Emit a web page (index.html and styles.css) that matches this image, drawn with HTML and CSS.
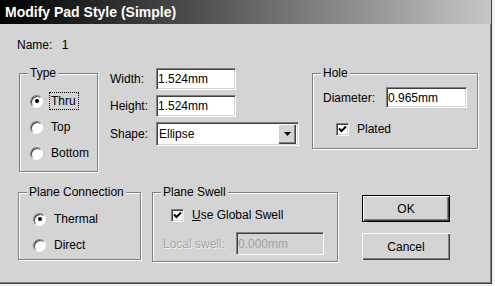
FILE: index.html
```html
<!DOCTYPE html>
<html lang="en">
<head>
  <meta charset="UTF-8">
  <title>Modify Pad Style (Simple)</title>
  <link rel="stylesheet" href="styles.css">
</head>
<body>
  <div class="window">
    <div class="titlebar">Modify Pad Style (Simple)</div>

    <div class="content">
      <div class="name-row">Name: <span class="name-value">1</span></div>

      <div class="row row-top">
        <fieldset class="group group-type">
          <legend>Type</legend>
          <div class="group-body">
            <label class="option"><span class="radio checked"></span><span class="caption focus">Thru</span></label>
            <label class="option"><span class="radio"></span><span class="caption">Top</span></label>
            <label class="option"><span class="radio"></span><span class="caption">Bottom</span></label>
          </div>
        </fieldset>

        <div class="size-fields">
          <span class="field-label">Width:</span>
          <input class="edit edit-size" type="text" value="1.524mm">
          <span class="field-label">Height:</span>
          <input class="edit edit-size" type="text" value="1.524mm">
          <span class="field-label">Shape:</span>
          <div class="combo">
            <span class="combo-text">Ellipse</span>
            <span class="combo-btn">
              <svg width="7" height="4" viewBox="0 0 7 4"><path d="M0 0h7L3.5 4z" fill="#000"/></svg>
            </span>
          </div>
        </div>

        <fieldset class="group group-hole">
          <legend>Hole</legend>
          <div class="group-body">
            <div class="line">
              <span class="hole-label">Diameter:</span>
              <input class="edit edit-hole" type="text" value="0.965mm">
            </div>
            <label class="check-row plated">
              <span class="checkbox"><svg width="9" height="9" viewBox="0 0 9 9"><path d="M1 3.5l2.5 2.5L8 1.5" stroke="#000" stroke-width="2" fill="none"/></svg></span>
              Plated
            </label>
          </div>
        </fieldset>
      </div>

      <div class="row row-bottom">
        <fieldset class="group group-plane">
          <legend>Plane Connection</legend>
          <div class="group-body">
            <label class="option"><span class="radio checked"></span><span class="caption">Thermal</span></label>
            <label class="option"><span class="radio"></span><span class="caption">Direct</span></label>
          </div>
        </fieldset>

        <fieldset class="group group-swell">
          <legend>Plane Swell</legend>
          <div class="group-body">
            <label class="check-row global">
              <span class="checkbox"><svg width="9" height="9" viewBox="0 0 9 9"><path d="M1 3.5l2.5 2.5L8 1.5" stroke="#000" stroke-width="2" fill="none"/></svg></span>
              <span><u>U</u>se Global Swell</span>
            </label>
            <div class="line local">
              <span class="disabled-label">Local swell:</span>
              <input class="edit edit-local" type="text" value="0.000mm" disabled>
            </div>
          </div>
        </fieldset>

        <div class="buttons">
          <button class="btn btn-default">OK</button>
          <button class="btn">Cancel</button>
        </div>
      </div>
    </div>
  </div>
</body>
</html>
```

FILE: styles.css
```css
html {
  background: #f2f2f2;
}

body {
  margin: 0;
  font-family: 'Liberation Sans', Arial, sans-serif;
  font-size: 12px;
  line-height: 14px;
  color: #000;
}

.window {
  width: 491px;
  height: 283px;
  background: #d4d4d4;
  border-right: 1px solid #404040;
  border-bottom: 1px solid #404040;
  box-shadow: inset -1px -1px 0 #808080;
  overflow: hidden;
}

.titlebar {
  height: 24px;
  line-height: 25px;
  padding-left: 5px;
  background: linear-gradient(to right, #000 0%, #c6c6c6 100%);
  color: #fff;
  font-weight: bold;
  font-size: 14px;
}

.content {
  padding: 14px 0 0 17px;
}

.name-value {
  margin-left: 6px;
}

.row {
  display: flex;
  align-items: flex-start;
}

.row-top {
  margin-top: 14px;
}

.row-bottom {
  margin-top: 13px;
}

/* group boxes */
.group {
  margin: 0;
  padding: 0;
  min-width: 0;
  box-sizing: border-box;
  border: 1px solid #808080;
  box-shadow: 1px 1px 0 #fff, inset 1px 1px 0 #fff;
}

.group legend {
  margin-left: 8px;
  padding: 0 2px;
  line-height: 14px;
  background: #d4d4d4;
}

.group-type {
  width: 79px;
  margin-left: 2px;
}

.group-type .group-body {
  padding: 12px 0 9px 10px;
  display: flex;
  flex-direction: column;
  gap: 8px;
}

.group-hole {
  width: 166px;
  margin-left: 13px;
}

.group-hole .group-body {
  padding: 7px 0 12px 10px;
}

.group-plane {
  width: 123px;
  margin-left: 1px;
}

.group-plane .group-body {
  padding: 11px 0 5px 14px;
  display: flex;
  flex-direction: column;
  gap: 8px;
}

.group-swell {
  width: 186px;
  margin-left: 11px;
}

.group-swell .group-body {
  padding: 9px 0 6px 10px;
}

/* radio buttons */
.option {
  display: flex;
  align-items: center;
  height: 18px;
}

.radio {
  width: 13px;
  height: 13px;
  box-sizing: border-box;
  border-radius: 50%;
  background: #fff;
  border: 1px solid;
  border-color: #808080 #fff #fff #808080;
  box-shadow: inset 1px 1px 0 #404040;
  display: flex;
  align-items: center;
  justify-content: center;
  margin-right: 6px;
}

.radio.checked::after {
  content: "";
  width: 4px;
  height: 4px;
  border-radius: 50%;
  background: #000;
}

.caption {
  border: 1px solid transparent;
  padding: 1px 1px;
  line-height: 14px;
}

.focus {
  border: 1px dotted #000;
  width: 26px;
  overflow: hidden;
  white-space: nowrap;
}

/* edit fields */
.edit {
  box-sizing: border-box;
  margin: 0;
  padding: 0 0 0 1px;
  font: inherit;
  color: #000;
  background: #fff;
  border: 1px solid;
  border-color: #808080 #fff #fff #808080;
  box-shadow: inset 1px 1px 0 #404040, inset -1px -1px 0 #d4d4d4;
  outline: none;
}

.size-fields {
  margin-left: 12px;
  margin-top: 2px;
  display: grid;
  grid-template-columns: 46px auto;
  grid-template-rows: 22px 22px 24px;
  row-gap: 5px;
  align-items: center;
  justify-items: start;
}

.edit-size {
  width: 80px;
  height: 22px;
}

.combo {
  width: 143px;
  height: 24px;
  box-sizing: border-box;
  background: #fff;
  border: 1px solid;
  border-color: #808080 #fff #fff #808080;
  box-shadow: inset 1px 1px 0 #404040, inset -1px -1px 0 #d4d4d4;
  display: flex;
  align-items: center;
  padding: 2px;
}

.combo-text {
  flex: 1;
}

.combo-btn {
  width: 18px;
  height: 20px;
  box-sizing: border-box;
  background: #d4d4d4;
  box-shadow: inset 1px 1px 0 #fff, inset -1px -1px 0 #404040, inset -2px -2px 0 #808080;
  display: flex;
  align-items: center;
  justify-content: center;
}

.line {
  display: flex;
  align-items: center;
}

.hole-label {
  width: 63px;
}

.edit-hole {
  width: 81px;
  height: 21px;
}

/* check boxes */
.check-row {
  display: flex;
  align-items: center;
  height: 14px;
}

.plated {
  margin: 14px 0 0 13px;
}

.global {
  margin-left: 8px;
}

.checkbox {
  width: 13px;
  height: 13px;
  box-sizing: border-box;
  background: #fff;
  border: 1px solid;
  border-color: #808080 #fff #fff #808080;
  box-shadow: inset 1px 1px 0 #404040, inset -1px -1px 0 #d4d4d4;
  display: flex;
  align-items: center;
  justify-content: center;
  margin-right: 8px;
}

.local {
  margin-top: 10px;
}

.disabled-label {
  width: 73px;
  color: #a4a4a4;
  text-shadow: 1px 1px 0 #f0f0f0;
}

.edit-local {
  width: 88px;
  height: 23px;
  background: #d4d4d4;
  color: #a0a0a0;
}

/* push buttons */
.buttons {
  margin-left: 24px;
  padding-top: 10px;
  display: flex;
  flex-direction: column;
  gap: 11px;
}

.btn {
  width: 88px;
  height: 27px;
  box-sizing: border-box;
  margin: 0;
  padding: 0;
  font: inherit;
  color: #000;
  background: #d4d4d4;
  border: none;
  box-shadow: inset 1px 1px 0 #fff, inset -1px -1px 0 #404040, inset -2px -2px 0 #808080;
}

.btn-default {
  border: 1px solid #000;
}
```
